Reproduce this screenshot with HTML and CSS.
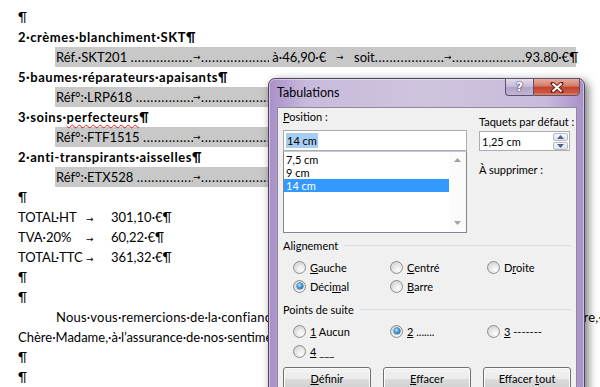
FILE: index.html
```html
<!DOCTYPE html>
<html lang="fr">
<head>
    <meta charset="UTF-8" />
    <title>Tabulations</title>
    <link rel="stylesheet" href="styles.css">
</head>
<body>

<!-- Document -->
<div class="doc">
    <p class="line">¶</p>
    <p class="line bold">2·crèmes·blanchiment·SKT¶</p>
    <div class="line band">
        <span class="c-ref"><span>Réf.·SKT201&nbsp;</span><span class="dots">..............................................</span></span>
        <span class="tab">→</span>
        <span class="c-lead dots">..............................................</span>
        <span class="c-price">&nbsp;à·46,90·€</span>
        <span class="tab wide">→</span>
        <span class="c-soit"><span>soit</span><span class="dots">..............................................</span></span>
        <span class="tab">→</span>
        <span class="c-lead2 dots">..............................................</span>
        <span>93.80·€¶</span>
    </div>
    <p class="line bold">5·baumes·réparateurs·apaisants¶</p>
    <div class="line band">
        <span class="c-ref"><span>Réf°:·LRP618&nbsp;</span><span class="dots">..............................................</span></span>
        <span class="tab">→</span>
        <span class="c-lead dots">..............................................</span>
    </div>
    <p class="line bold">3·soins·<span class="typo">perfecteurs</span>¶</p>
    <div class="line band">
        <span class="c-ref"><span>Réf°:·FTF1515&nbsp;</span><span class="dots">..............................................</span></span>
        <span class="tab">→</span>
        <span class="c-lead dots">..............................................</span>
    </div>
    <p class="line bold">2·anti-transpirants·aisselles¶</p>
    <div class="line band">
        <span class="c-ref"><span>Réf°:·ETX528&nbsp;</span><span class="dots">..............................................</span></span>
        <span class="tab">→</span>
        <span class="c-lead dots">..............................................</span>
    </div>
    <p class="line">¶</p>
    <p class="line"><span class="tot-lbl">TOTAL·HT</span><span class="tot-tab">→</span>301,10·€¶</p>
    <p class="line"><span class="tot-lbl">TVA·20%</span><span class="tot-tab">→</span>60,22·€¶</p>
    <p class="line"><span class="tot-lbl">TOTAL·TTC</span><span class="tot-tab">→</span>361,32·€¶</p>
    <p class="line">¶</p>
    <p class="line">¶</p>
    <!-- justified line, runs to the right margin -->
    <p class="line indent justify">
        <span>Nous·vous·remercions·de·la·confiance·que·vous·nous·témoignez·et·vous·prions·de·</span><span>croire,·</span>
    </p>
    <p class="line">Chère·Madame,·à·l’assurance·de·nos·sentiments·distingués.¶</p>
    <p class="line">¶</p>
    <p class="line">¶</p>
</div>

<!-- Tabulations dialog -->
<div class="dialog">
    <div class="titlebar">
        <span class="title">Tabulations</span>
        <div class="caption-btns">
            <span class="btn-help">?</span>
            <span class="btn-close">
                <svg width="14" height="11" viewBox="0 0 14 11">
                    <path d="M2.5 1.5 L11.5 9.5 M11.5 1.5 L2.5 9.5" stroke="#6b2418" stroke-width="4" stroke-linecap="round"/>
                    <path d="M2.5 1.5 L11.5 9.5 M11.5 1.5 L2.5 9.5" stroke="#fff" stroke-width="2"/>
                </svg>
            </span>
        </div>
    </div>

    <div class="client">
        <div class="top">
            <div class="col-left">
                <div class="lbl lbl-pos"><u>P</u>osition :</div>
                <div class="input"><span class="sel">14 cm</span></div>
                <div class="list">
                    <div class="items">
                        <div class="item">7,5 cm</div>
                        <div class="item">9 cm</div>
                        <div class="item on">14 cm</div>
                    </div>
                    <div class="vscroll">
                        <svg width="7" height="4" viewBox="0 0 7 4"><path d="M0 4 L3.5 0 L7 4 Z" fill="#a0a0a0"/></svg>
                        <svg width="7" height="4" viewBox="0 0 7 4"><path d="M0 0 L3.5 4 L7 0 Z" fill="#a0a0a0"/></svg>
                    </div>
                </div>
            </div>
            <div class="col-right">
                <div class="lbl lbl-def">Taquets par défaut :</div>
                <div class="spin">
                    <span>1,25 cm</span>
                    <div class="spin-btns">
                        <span class="sb"><svg width="7" height="4" viewBox="0 0 7 4"><path d="M0 4 L3.5 0 L7 4 Z" fill="#4d6185"/></svg></span>
                        <span class="sb"><svg width="7" height="4" viewBox="0 0 7 4"><path d="M0 0 L3.5 4 L7 0 Z" fill="#4d6185"/></svg></span>
                    </div>
                </div>
                <div class="lbl lbl-del">À supprimer :</div>
            </div>
        </div>

        <div class="grp grp-align">Alignement</div>
        <div class="radios">
            <div class="radio"><span class="rb"></span><span><u>G</u>auche</span></div>
            <div class="radio"><span class="rb"></span><span><u>C</u>entré</span></div>
            <div class="radio"><span class="rb"></span><span>D<u>r</u>oite</span></div>
            <div class="radio"><span class="rb on"></span><span>Déci<u>m</u>al</span></div>
            <div class="radio"><span class="rb"></span><span><u>B</u>arre</span></div>
        </div>

        <div class="grp grp-lead">Points de suite</div>
        <div class="radios radios-lead">
            <div class="radio"><span class="rb"></span><span><u>1</u> Aucun</span></div>
            <div class="radio"><span class="rb on"></span><span><u>2</u> .......</span></div>
            <div class="radio"><span class="rb"></span><span><u>3</u> -------</span></div>
            <div class="radio"><span class="rb"></span><span><u>4</u> ___</span></div>
        </div>

        <div class="buttons">
            <button type="button"><u>D</u>éfinir</button>
            <button type="button"><u>E</u>ffacer</button>
            <button type="button">Effacer <u>t</u>out</button>
        </div>
    </div>
</div>

</body>
</html>
```

FILE: styles.css
```css
/* Base */
* {
    box-sizing: border-box;
}

html, body {
    margin: 0;
    height: 387px;
    overflow: hidden;
    background: #fff;
}

body {
    position: relative;
    font-family: Lato, "Open Sans", sans-serif;
    font-size: 13px;
    color: #000;
}

/* Document */
.doc {
    padding: 7px 0 0 18px;
}

.line {
    height: 20px;
    line-height: 20px;
    margin: 0;
    white-space: nowrap;
}

.bold {
    font-weight: bold;
    letter-spacing: 0.55px;
}

.indent {
    padding-left: 38px;
}

.justify {
    display: flex;
    justify-content: space-between;
    width: 584px;
    letter-spacing: 0.2px;
}

.typo {
    text-decoration: underline wavy #e02020;
    text-decoration-thickness: 1px;
    text-underline-offset: 2px;
}

.band {
    display: flex;
    width: 521px;
    margin-left: 37px;
    padding-left: 1px;
    background: #c8c8c8;
}

.dots {
    overflow: hidden;
    letter-spacing: 0.6px;
}

.c-ref {
    display: flex;
    width: 137px;
    flex: none;
}

.c-ref .dots,
.c-soit .dots {
    flex: 1;
}

.c-lead {
    width: 68px;
    flex: none;
}

.c-price {
    width: 64px;
    flex: none;
}

.c-soit {
    display: flex;
    width: 90px;
    flex: none;
}

.c-lead2 {
    width: 73px;
    flex: none;
}

.tab {
    width: 8px;
    flex: none;
    font-size: 9px;
    font-family: "DejaVu Sans", sans-serif;
}

.tab.wide {
    width: 21px;
    padding-left: 3px;
}

.tot-lbl {
    display: inline-block;
    width: 68px;
}

.tot-tab {
    display: inline-block;
    width: 25px;
    font-size: 9px;
    font-family: "DejaVu Sans", sans-serif;
}

/* Dialog window */
.dialog {
    position: absolute;
    left: 268px;
    top: 78px;
    width: 317px;
    height: 340px;
    padding: 0 7px 0 8px;
    border: 1px solid #4e4560;
    border-radius: 7px 7px 0 0;
    background: linear-gradient(to right, #a890c8, #c8badc 12%, #cfc4de 50%, #c8badc 88%, #a890c8);
    box-shadow: 3px 3px 10px rgba(0, 0, 0, 0.55), inset 0 0 0 1px rgba(255, 255, 255, 0.45);
    font-family: Lato, "Noto Sans", sans-serif;
    font-size: 11px;
    color: #000;
}

.titlebar {
    display: flex;
    justify-content: space-between;
    align-items: flex-start;
    height: 28px;
}

.title {
    padding-top: 6px;
    font-size: 12.5px;
    line-height: 16px;
}

.caption-btns {
    display: flex;
    margin-top: -1px;
    margin-right: -3px;
}

.btn-help,
.btn-close {
    display: flex;
    align-items: center;
    justify-content: center;
    height: 18px;
    border: 1px solid #5d5170;
}

.btn-help {
    width: 28px;
    border-right: none;
    border-radius: 0 0 0 4px;
    background: linear-gradient(#e3dcec, #c5b8d6 50%, #b3a3c8 51%, #c2b4d6);
    color: #fff;
    font-family: "DejaVu Sans", sans-serif;
    font-weight: bold;
    font-size: 12px;
    text-shadow: 0 0 2px #3c3050, 0 0 1px #3c3050;
}

.btn-close {
    width: 47px;
    border-radius: 0 0 4px 0;
    background: linear-gradient(#e8a99c, #d27a68 45%, #c2432e 50%, #d0563f 85%, #e08a70);
}

.client {
    height: 320px;
    padding: 1px 5px 0 5px;
    border: 1px solid #8d8a99;
    background: #f0f0f0;
}

.lbl {
    line-height: 16px;
    white-space: nowrap;
}

.top {
    display: flex;
    gap: 12px;
}

.col-left {
    width: 184px;
}

.lbl-pos {
    margin-bottom: 5px;
}

.input,
.spin {
    display: flex;
    align-items: center;
    height: 21px;
    padding-left: 2px;
    border: 1px solid #abadb3;
    background: #fff;
}

.sel {
    padding: 0 1px;
    background: #a8cdf2;
    line-height: 15px;
}

.list {
    display: flex;
    height: 82px;
    border: 1px solid #828790;
    border-top-color: #c7c9cc;
    background: #fff;
}

.items {
    flex: 1;
    padding-top: 1px;
}

.item {
    height: 13px;
    line-height: 13px;
    padding-left: 2px;
}

.item.on {
    background: #3399ff;
    color: #fff;
}

.vscroll {
    display: flex;
    flex-direction: column;
    justify-content: space-between;
    align-items: center;
    width: 17px;
    padding: 6px 0 7px;
    background: #fbfbfb;
}

.col-right {
    width: 91px;
}

.lbl-def {
    margin-top: 5px;
    margin-bottom: 1px;
}

.spin {
    justify-content: space-between;
    height: 20px;
    padding-right: 1px;
}

.spin-btns {
    display: flex;
    flex-direction: column;
    gap: 1px;
}

.sb {
    display: flex;
    align-items: center;
    justify-content: center;
    width: 15px;
    height: 8px;
    border: 1px solid #b5bcc7;
    border-radius: 2px;
    background: linear-gradient(#f6f8fb, #dde3ea);
}

.lbl-del {
    margin-top: 11px;
}

/* Groups */
.grp {
    display: flex;
    align-items: center;
    height: 16px;
}

.grp::after {
    content: "";
    flex: 1;
    height: 1px;
    margin-left: 6px;
    background: #d5dfe5;
}

.grp-align {
    margin-top: 4px;
}

.grp-lead {
    margin-top: 7px;
}

.radios {
    display: grid;
    grid-template-columns: 97px 97px 1fr;
    row-gap: 3px;
    margin-top: 6px;
    padding-left: 10px;
}

.radios-lead {
    row-gap: 4px;
}

.radio {
    display: flex;
    align-items: center;
    gap: 4px;
    height: 16px;
}

.rb {
    position: relative;
    width: 13px;
    height: 13px;
    border: 1px solid #8b8d90;
    border-radius: 50%;
    background: radial-gradient(circle at 65% 70%, #fdfdfd, #e2e2e2 55%, #c9c9c9);
}

.rb.on::after {
    content: "";
    position: absolute;
    left: 2.5px;
    top: 2.5px;
    width: 6px;
    height: 6px;
    border-radius: 50%;
    background: radial-gradient(circle at 40% 35%, #b9e8ff, #3d9ae0 45%, #0c4f8c);
    box-shadow: 0 0 0 0.5px #17507e;
}

/* Buttons */
.buttons {
    display: grid;
    grid-template-columns: repeat(3, 88px);
    gap: 12px;
    margin-top: 8px;
}

.buttons button {
    height: 23px;
    padding: 0;
    border: 1px solid #707070;
    border-radius: 3px;
    background: linear-gradient(#f2f2f2, #ebebeb 50%, #dddddd 51%, #cfcfcf);
    box-shadow: inset 0 0 0 1px #fcfcfc;
    font-family: Lato, "Noto Sans", sans-serif;
    font-size: 11px;
    color: #000;
}
```
